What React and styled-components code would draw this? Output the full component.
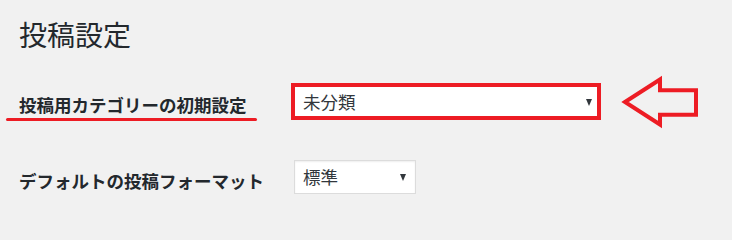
import React from 'react';
import styled, { createGlobalStyle } from 'styled-components';

const GlobalStyle = createGlobalStyle`
  html, body {
    margin: 0;
    padding: 0;
    background: #f1f1f1;
  }
  body {
    font-family: "Noto Sans CJK JP", "Noto Sans", sans-serif;
    color: #23282d;
  }
`;

const Page = styled.main`
  padding: 20px 0 0 19px;
  height: 219px;
  box-sizing: border-box;
  overflow: hidden;
`;

const Title = styled.h1`
  margin: 0;
  font-size: 28px;
  line-height: 28px;
  font-weight: 400;
`;

const Row = styled.div`
  display: flex;
  align-items: center;
  height: ${(p) => p.$height}px;
  margin-top: ${(p) => p.$gap}px;
`;

const Label = styled.div`
  position: relative;
  width: 275px;
  flex: none;
  padding-top: 7px;
  font-size: 17.5px;
  line-height: 24px;
  font-weight: 700;
  white-space: nowrap;

  /* red marker line under the label */
  ${(p) =>
    p.$marked &&
    `
    &::after {
      content: "";
      position: absolute;
      left: -13px;
      width: 251px;
      bottom: -4px;
      height: 3.5px;
      border-radius: 2px;
      background: #ed1c24;
    }
  `}
`;

const Highlight = styled.div`
  margin-left: -3px;
  border: 4px solid #ed1c24;
  display: flex;
`;

const Select = styled.div`
  display: flex;
  align-items: center;
  justify-content: space-between;
  box-sizing: border-box;
  width: ${(p) => p.$width}px;
  height: ${(p) => p.$height}px;
  padding: 0 ${(p) => p.$right}px 0 8px;
  background: #fff;
  border: ${(p) => (p.$plain ? 'none' : '1px solid #dcdcdc')};
  box-shadow: ${(p) => (p.$plain ? 'none' : 'inset 0 1px 2px rgba(0, 0, 0, 0.07)')};
  font-size: 17.5px;
  line-height: 24px;
  color: #32373c;
`;

const Caret = styled.span`
  width: 0;
  height: 0;
  border-left: 3.5px solid transparent;
  border-right: 3.5px solid transparent;
  border-top: 7px solid #32373c;
  margin-top: 1px;
`;

const Arrow = styled.svg`
  flex: none;
  margin-left: 17px;
  display: block;
`;

function PointerArrow() {
  return (
    <Arrow width="82" height="60" viewBox="0 0 82 60">
      <polygon
        points="7,30 42,7.5 42,18.3 78,18.3 78,42.7 42,42.7 42,52.5"
        fill="none"
        stroke="#ed1c24"
        strokeWidth="4"
        strokeLinejoin="miter"
      />
    </Arrow>
  );
}

export default function App() {
  return (
    <>
      <GlobalStyle />
      <Page>
        <Title>投稿設定</Title>

        <Row $height={37} $gap={35}>
          <Label $marked>投稿用カテゴリーの初期設定</Label>
          <Highlight>
            <Select $plain $width={302} $height={29} $right={5}>
              <span>未分類</span>
              <Caret />
            </Select>
          </Highlight>
          <PointerArrow />
        </Row>

        <Row $height={34} $gap={40}>
          <Label>デフォルトの投稿フォーマット</Label>
          <Select $width={122} $height={34} $right={9}>
            <span>標準</span>
            <Caret />
          </Select>
        </Row>
      </Page>
    </>
  );
}
